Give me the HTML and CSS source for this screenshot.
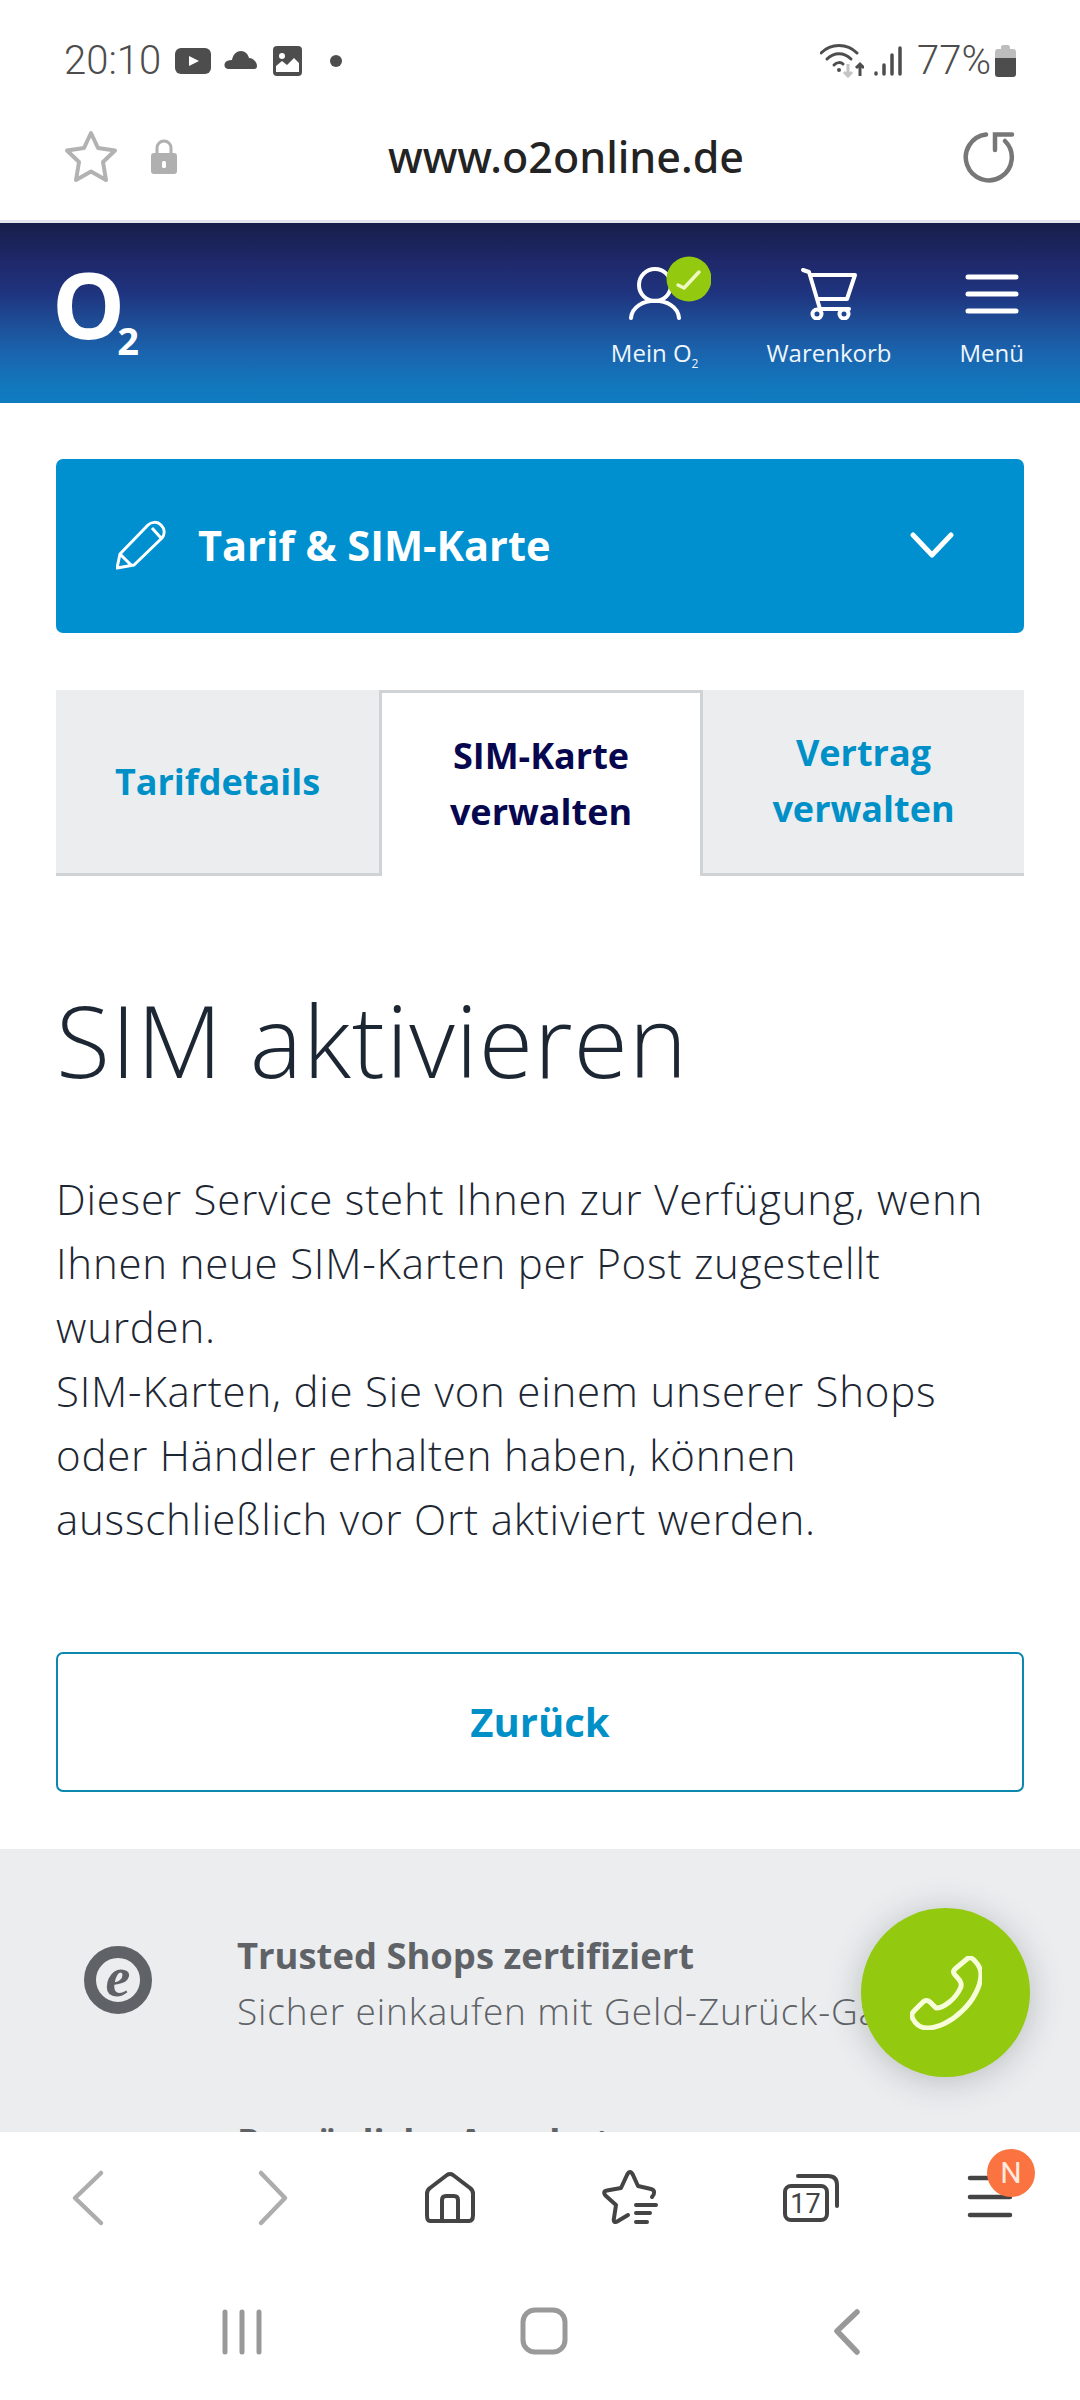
FILE: index.html
```html
<!DOCTYPE html>
<html lang="de">
<head>
<meta charset="utf-8">
<title>SIM aktivieren</title>
<link rel="stylesheet" href="styles.css">
</head>
<body>
<div class="phone">
  <div class="status">
    <div class="status-left">
      <span class="time">20:10</span>
      <svg class="si yt" viewBox="0 0 36 26"><rect width="36" height="26" rx="6" fill="#4d4d4d"/><path d="M14 8l10 5-10 5z" fill="#fff"/></svg>
      <svg class="si cloud" viewBox="0 0 33 20"><path d="M4 19C0 19-1 13 3 11 5 10 7 10 8 10 9 4 13 1 17 1 21 1 24 4 25 8 29 8 33 12 33 16 33 18 32 19 30 19Z" fill="#4d4d4d"/></svg>
      <svg class="si pic" viewBox="0 0 29 30"><rect width="29" height="30" rx="4" fill="#4d4d4d"/><circle cx="9" cy="10" r="3" fill="#fff"/><path d="M3 20l6-5 5 4 7-7 5 5v9H3z" fill="#fff"/></svg>
      <span class="dot"></span>
    </div>
    <div class="status-right">
      <svg class="si wifi" viewBox="0 0 44 34"><g fill="none" stroke="#4d4d4d" stroke-width="3" stroke-linecap="round"><path d="M1 9C11-1 27-1 37 9"/><path d="M7 15C14 8 24 8 31 15"/><path d="M14 21C17 18 21 18 23 20"/></g><circle cx="19" cy="26" r="2" fill="#4d4d4d"/><path d="M28 20v12M24 28l4 4 4-4" fill="none" stroke="#c4c4c4" stroke-width="3"/><path d="M40 32V20M36 24l4-4 4 4" fill="none" stroke="#4d4d4d" stroke-width="3"/></svg>
      <svg class="si sig" viewBox="0 0 28 30"><g stroke="#4d4d4d" stroke-width="3.500" stroke-linecap="round"><path d="M2 28v-1M10 28V19M18 28V9M26 28V2"/></g></svg>
      <span class="pct">77%</span>
      <svg class="si batt" viewBox="0 0 21 32"><path d="M6 2.500Q6 0 8 0h5q2 0 2 2.500V4h3q3 0 3 3v6H0V7q0-3 3-3h3z" fill="#bdbdbd"/><path d="M0 13h21v16q0 3-3 3H3q-3 0-3-3z" fill="#4d4d4d"/></svg>
    </div>
  </div>

  <div class="address">
    <div class="addr-left">
      <svg class="star" viewBox="0 0 56 54"><path d="M28 3L35 18 52 20.500 40 32 43 50 28 41.500 13 50 16 32 4 20.500 21 18Z" fill="none" stroke="#b2b2b2" stroke-width="4" stroke-linejoin="round"/></svg>
      <svg class="lock" viewBox="0 0 26 36"><path d="M6 15V9a7 7 0 0 1 14 0v6" fill="none" stroke="#b0b0b0" stroke-width="3"/><rect y="14" width="26" height="21" rx="3" fill="#b0b0b0"/><rect x="11" y="22" width="4" height="7" rx="1.500" fill="#fff"/></svg>
    </div>
    <div class="url">www.o2online.de</div>
    <svg class="reload" viewBox="0 0 56 56"><path d="M26 5.500A23 23 0 1 0 45 12" fill="none" stroke="#777" stroke-width="4.500" stroke-linecap="round"/><path d="M35 21V5.500H52" fill="none" stroke="#777" stroke-width="4.500" stroke-linecap="round"/></svg>
  </div>

  <header class="site-head">
    <div class="logo"><span class="logo-o">O</span><span class="logo-2">2</span></div>
    <nav class="head-nav">
      <div class="head-item">
        <svg class="hi hi-user" viewBox="0 0 112 65"><circle cx="56" cy="30" r="16" fill="none" stroke="#fff" stroke-width="4"/><path d="M32 63C34 40 78 40 80 63" fill="none" stroke="#fff" stroke-width="4" stroke-linecap="round"/><circle cx="90" cy="24" r="22.500" fill="#93c90e"/><path d="M79 30l6 3 15-16" fill="none" stroke="#eef8c0" stroke-width="3.500" stroke-linecap="round" stroke-linejoin="round"/></svg>
        <span class="head-label">Mein O<sub>2</sub></span>
      </div>
      <div class="head-item">
        <svg class="hi hi-cart" viewBox="0 0 60 65"><path d="M4 15l6 2 11 37h29M12 20h44l-8 24H19" fill="none" stroke="#fff" stroke-width="4" stroke-linecap="round" stroke-linejoin="round"/><circle cx="18" cy="59" r="4.500" fill="none" stroke="#fff" stroke-width="4"/><circle cx="45" cy="59" r="4.500" fill="none" stroke="#fff" stroke-width="4"/></svg>
        <span class="head-label">Warenkorb</span>
      </div>
      <div class="head-item">
        <svg class="hi hi-menu" viewBox="0 0 60 65"><path d="M6 22h48M6 39h48M6 56h48" stroke="#fff" stroke-width="5" stroke-linecap="round"/></svg>
        <span class="head-label">Menü</span>
      </div>
    </nav>
  </header>

  <main class="main">
    <div class="content">
      <div class="accordion">
        <svg class="pencil" viewBox="0 0 50 50"><path d="M1 48L4 34 32 5C35 2 41 1 45 5 49 9 49 14 46 18L18 45ZM36 8L45 18M5 35L15 45" fill="none" stroke="#fff" stroke-width="3" stroke-linejoin="round"/></svg>
        <span class="acc-title">Tarif &amp; SIM-Karte</span>
        <svg class="chev" viewBox="0 0 44 28"><path d="M3 4l19 20L41 4" fill="none" stroke="#fff" stroke-width="5" stroke-linecap="round" stroke-linejoin="round"/></svg>
      </div>

      <div class="tabs">
        <div class="tab">Tarifdetails</div>
        <div class="tab tab-active">SIM-Karte<br>verwalten</div>
        <div class="tab tab-up">Vertrag<br>verwalten</div>
      </div>

      <h1 class="title">SIM aktivieren</h1>
      <p class="copy">Dieser Service steht Ihnen zur Verfügung, wenn Ihnen neue SIM-Karten per Post zugestellt wurden.<br>SIM-Karten, die Sie von einem unserer Shops oder Händler erhalten haben, können ausschließlich vor Ort aktiviert werden.</p>
      <div class="back-btn">Zurück</div>
    </div>

    <section class="usp">
      <div class="usp-row">
        <div class="usp-icon"><span class="usp-e">e</span></div>
        <div class="usp-text">
          <div class="usp-title">Trusted Shops zertifiziert</div>
          <div class="usp-sub">Sicher einkaufen mit Geld-Zurück-Garantie</div>
        </div>
      </div>
      <div class="usp-row">
        <div class="usp-icon usp-blank"></div>
        <div class="usp-text">
          <div class="usp-title">Persönliche Angebote</div>
        </div>
      </div>
    </section>
  </main>

  <div class="fab">
    <svg class="phone-ico" viewBox="0 0 72 74"><path d="M57 3C59 1 62 2 64 4 68 8 71 12 71 18 71 30 63 45 52 55 42 65 28 72 18 72 12 72 6 69 3 63 1 60 2 57 4 55L13 46C15 44 18 44 20 46L26 52C34 52 45 43 50 33 53 28 50 24 45 19 43 17 43 15 45 13Z" fill="none" stroke="#f6fdd8" stroke-width="5" stroke-linejoin="round"/></svg>
  </div>

  <nav class="browser-nav">
    <div class="bn"><svg class="bi" viewBox="0 0 60 60"><path d="M41 5L15 30 41 55" fill="none" stroke="#adadad" stroke-width="4.500" stroke-linecap="round" stroke-linejoin="round"/></svg></div>
    <div class="bn"><svg class="bi" viewBox="0 0 60 60"><path d="M21 5L45 30 21 55" fill="none" stroke="#adadad" stroke-width="4.500" stroke-linecap="round" stroke-linejoin="round"/></svg></div>
    <div class="bn"><svg class="bi" viewBox="0 0 60 60"><path d="M10 53Q7 53 7 47V26Q7 22 10 20L27 7Q30 5 33 7L50 20Q53 22 53 26V47Q53 53 49 53ZM22 53V32Q22 28 26 28H34Q38 28 38 32V53" fill="none" stroke="#444" stroke-width="4" stroke-linejoin="round"/></svg></div>
    <div class="bn"><svg class="bi" viewBox="0 0 60 60"><path d="M28 47L18 53C15 55 13 54 14 50L16 37 6 28C3 25 4 23 7 22.500L21 20 27 7C29 3 31 3 33 7L38 18 51 21C55 22 55 26 52 29" fill="none" stroke="#444" stroke-width="4" stroke-linecap="round" stroke-linejoin="round"/><path d="M36 37H56M36 45H50M36 54H47" stroke="#444" stroke-width="4" stroke-linecap="round"/></svg></div>
    <div class="bn"><svg class="bi" viewBox="0 0 60 60"><rect x="5" y="18" width="42" height="34" rx="6" fill="none" stroke="#444" stroke-width="4"/><path d="M18 8H48Q57 8 57 17V38" fill="none" stroke="#444" stroke-width="4" stroke-linecap="round"/><text class="tabs-count" x="25.500" y="45" text-anchor="middle">17</text></svg></div>
    <div class="bn bn-menu">
      <svg class="bi" viewBox="0 0 60 60"><path d="M10 10H50M10 29H50M10 47H50" stroke="#444" stroke-width="4.500" stroke-linecap="round"/></svg>
      <span class="badge">N</span>
    </div>
  </nav>

  <nav class="system-nav">
    <div class="sn"><svg class="sni" viewBox="0 0 60 48"><path d="M13 5V45M30 5V45M47 5V45" stroke="#999" stroke-width="5" stroke-linecap="round"/></svg></div>
    <div class="sn"><svg class="sni" viewBox="0 0 60 48"><rect x="9" y="3" width="42" height="42" rx="12" fill="none" stroke="#999" stroke-width="5"/></svg></div>
    <div class="sn"><svg class="sni" viewBox="0 0 60 48"><path d="M41 5L21 24 41 45" fill="none" stroke="#999" stroke-width="5.500" stroke-linecap="round" stroke-linejoin="round"/></svg></div>
  </nav>
</div>
</body>
</html>
```

FILE: styles.css
```css
* { box-sizing: border-box; }
html, body { margin: 0; padding: 0; background: #fff; }
.phone {
  position: relative;
  width: 1080px;
  height: 2400px;
  display: flex;
  flex-direction: column;
  overflow: hidden;
  font-family: "Open Sans", "Noto Sans", sans-serif;
  color: #1d2733;
}
.status {
  height: 100px;
  flex: none;
  padding: 22px 64px 0 64px;
  display: flex;
  justify-content: space-between;
  align-items: center;
  color: #4d4d4d;
  font-family: Roboto, sans-serif;
}
.status-left, .status-right { display: flex; align-items: center; }
.time { font-size: 40px; font-weight: 300; line-height: 48px; width: 111px; }
.si { display: block; flex: none; }
.yt { width: 36px; height: 26px; }
.cloud { width: 33px; height: 20px; margin-left: 13px; margin-top: -2px; }
.pic { width: 29px; height: 30px; margin-left: 16px; }
.dot { width: 12px; height: 12px; border-radius: 50%; background: #4d4d4d; margin-left: 28px; }
.wifi { width: 44px; height: 34px; margin-right: 10px; }
.sig { width: 28px; height: 30px; margin-right: 15px; }
.pct { font-size: 40px; font-weight: 300; line-height: 48px; width: 78px; }
.batt { width: 21px; height: 32px; }
.address {
  flex: none;
  height: 123px;
  display: grid;
  grid-template-columns: auto 1fr auto;
  align-items: center;
  padding: 0 64px 6px 63px;
  border-bottom: 3px solid #e4e6ee;
}
.addr-left { display: flex; align-items: center; }
.star { width: 56px; height: 54px; }
.lock { width: 26px; height: 36px; margin-left: 32px; }
.url {
  justify-self: center;
  padding-right: 5px;
  font-family: "Noto Sans", sans-serif;
  font-size: 43px;
  font-weight: 500;
  line-height: 56px;
  color: #232323;
}
.reload { width: 56px; height: 56px; justify-self: end; }
.site-head {
  flex: none;
  height: 180px;
  display: flex;
  justify-content: space-between;
  padding: 0 56px 0 52px;
  background: linear-gradient(#161f49 0, #1f2768 20%, #1f3580 40%, #1e4a93 53%, #1a64ae 72%, #1278bd 91%, #0f7cc0 100%);
  color: #fff;
}
.logo { display: flex; align-items: flex-start; padding-top: 26px; font-weight: 700; }
.logo-o { font-size: 92px; line-height: 110px; letter-spacing: -8px; }
.logo-2 { font-size: 38px; line-height: 48px; margin-top: 67px; }
.head-nav { display: flex; gap: 68px; padding-top: 32px; }
.head-item { display: flex; flex-direction: column; align-items: center; }
.hi { display: block; height: 65px; flex: none; }
.hi-user { width: 112px; margin: 0 -16px; }
.hi-cart, .hi-menu { width: 60px; }
.head-label { font-size: 24px; line-height: 36px; margin-top: 15px; white-space: nowrap; color: #eef6fc; }
.head-label sub { font-size: 12px; line-height: 0; }
.main { flex: 1; min-height: 0; overflow: hidden; display: flex; flex-direction: column; }
.content { padding: 56px 56px 57px; flex: none; }
.accordion {
  height: 174px;
  border-radius: 7px;
  background: #0090d0;
  color: #fff;
  display: flex;
  align-items: center;
  padding: 0 70px 3px 60px;
}
.pencil { width: 50px; height: 50px; flex: none; }
.acc-title { font-size: 41.5px; font-weight: 700; margin-left: 32px; flex: 1; }
.chev { width: 44px; height: 28px; }
.tabs { margin-top: 57px; display: grid; grid-template-columns: 323px 324px 321px; height: 186px; }
.tab {
  display: flex;
  align-items: center;
  justify-content: center;
  text-align: center;
  background: #ebedef;
  border-bottom: 3px solid #d0d3d6;
  color: #0090c8;
  font-size: 36px;
  font-weight: 700;
  line-height: 56px;
}
.tab-up { padding-bottom: 1px; }
.tab-active {
  background: #fff;
  border: 3px solid #d0d3d6;
  border-bottom: 0;
  padding-bottom: 1px;
  color: #07074f;
}
.title { margin: 104px 0 0; font-size: 99px; font-weight: 300; line-height: 120px; letter-spacing: .9px; color: #1d2733; }
.copy { margin: 67px 0 0; font-size: 42px; font-weight: 300; line-height: 64px; letter-spacing: .78px; color: #1d2733; }
.back-btn {
  margin-top: 101px;
  height: 140px;
  padding-bottom: 2px;
  border: 2px solid #0c87ad;
  border-radius: 7px;
  display: flex;
  align-items: center;
  justify-content: center;
  color: #0090c8;
  font-size: 40px;
  font-weight: 700;
}
.usp { flex: 1; background: #ebedef; padding-top: 78px; color: #5f6266; }
.usp-row { display: flex; height: 186px; }
.usp-icon {
  width: 68px;
  height: 68px;
  margin: 19px 0 0 84px;
  border: 12px solid #5f6266;
  border-radius: 50%;
  display: flex;
  align-items: center;
  justify-content: center;
  flex: none;
}
.usp-blank { visibility: hidden; }
.usp-e { font-family: "Liberation Serif", serif; font-style: italic; font-size: 56px; font-weight: 700; line-height: 46px; margin-top: -6px; }
.usp-text { margin-left: 85px; white-space: nowrap; }
.usp-title { font-size: 36.4px; font-weight: 700; line-height: 56px; }
.usp-sub { font-size: 37px; font-weight: 300; line-height: 56px; letter-spacing: .9px; }
.fab {
  position: absolute;
  left: 861px;
  top: 1908px;
  width: 169px;
  height: 169px;
  border-radius: 50%;
  background: #93c90e;
  box-shadow: 0 4px 34px rgba(60, 70, 70, .28);
  display: flex;
  align-items: center;
  justify-content: center;
}
.phone-ico { width: 72px; height: 74px; }
.browser-nav {
  flex: none;
  height: 144px;
  display: grid;
  grid-template-columns: repeat(6, 180px);
  background: #fff;
  padding-top: 36px;
  align-content: start;
}
.bn { position: relative; display: flex; justify-content: center; height: 60px; }
.bi { width: 60px; height: 60px; display: block; }
.tabs-count { font-family: Roboto, sans-serif; font-size: 27px; fill: #444; }
.badge {
  position: absolute;
  left: 87px;
  top: -19px;
  width: 48px;
  height: 48px;
  border-radius: 50%;
  background: #fb7340;
  color: #ffe9df;
  font-family: Roboto, sans-serif;
  font-size: 30px;
  line-height: 48px;
  text-align: center;
}
.system-nav {
  flex: none;
  height: 124px;
  display: grid;
  grid-template-columns: repeat(3, 302px);
  justify-content: center;
  padding: 31px 0 0 8px;
  background: #fff;
}
.sn { display: flex; justify-content: center; height: 48px; }
.sni { width: 60px; height: 48px; display: block; }
```
